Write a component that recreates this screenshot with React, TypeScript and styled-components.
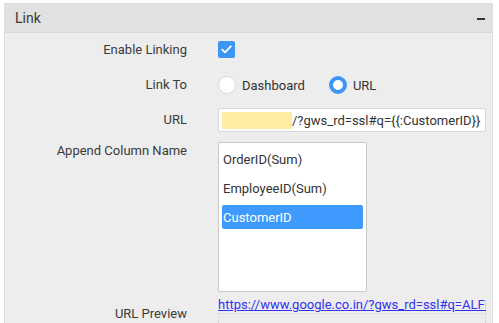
import React from "react";
import styled, { createGlobalStyle } from "styled-components";

const GlobalStyle = createGlobalStyle`
  html, body {
    margin: 0;
    padding: 0;
    background: #ffffff;
    font-family: Roboto, "Liberation Sans", Arial, sans-serif;
    color: #333333;
  }
  * { box-sizing: border-box; }
`;

const columns = ["OrderID(Sum)", "EmployeeID(Sum)", "CustomerID"];

const App = () => {
  return (
    <>
      <GlobalStyle />
      <Panel>
        <Header>
          <HeaderTitle>Link</HeaderTitle>
          <Collapse />
        </Header>
        <Body>
          <Row $top={4} $height={25}>
            <Label>Enable Linking</Label>
            <Checkbox>
              <svg width="11" height="9" viewBox="0 0 11 9">
                <path d="M1.2 4.6 L4 7.3 L9.8 1.3" fill="none" stroke="#fff" strokeWidth="1.8" strokeLinecap="round" strokeLinejoin="round" />
              </svg>
            </Checkbox>
          </Row>
          <Row $top={11} $height={24}>
            <Label>Link To</Label>
            <RadioGroup>
              <RadioOption>
                <Radio $checked={false} />
                <OptionText>Dashboard</OptionText>
              </RadioOption>
              <RadioOption>
                <Radio $checked={true} />
                <OptionText>URL</OptionText>
              </RadioOption>
            </RadioGroup>
          </Row>
          <Row $top={11} $height={24}>
            <Label>URL</Label>
            <UrlInput>
              <Redacted />
              <span>/?gws_rd=ssl#q={"{{"}:CustomerID{"}}"}</span>
            </UrlInput>
          </Row>
          <Row $top={10} $align="start">
            <Label $lineTop={0}>Append Column Name</Label>
            <ListBox>
              {columns.map((c) => (
                <ListItem key={c} $selected={c === "CustomerID"}>
                  {c}
                </ListItem>
              ))}
            </ListBox>
          </Row>
          <Row $top={5} $align="start">
            <Label $lineTop={8}>URL Preview</Label>
            <Preview>
              <PreviewLink href="#">https://www.google.co.in/?gws_rd=ssl#q=ALFKI</PreviewLink>
              <PreviewBox />
            </Preview>
          </Row>
        </Body>
      </Panel>
    </>
  );
};

const Panel = styled.div`
  margin: 3px 6px 0 4px;
  height: 320px;
  background: #ededed;
  border: 1px solid #dedede;
  border-bottom: none;
  overflow: hidden;
`;

const Header = styled.div`
  height: 29px;
  display: flex;
  align-items: center;
  justify-content: space-between;
  padding: 0 7px 0 10px;
  background: #e1e1e1;
  border-bottom: 1px solid #d8d8d8;
`;

const HeaderTitle = styled.span`
  font-size: 14px;
  color: #3a3a3a;
`;

const Collapse = styled.span`
  width: 8px;
  height: 2px;
  background: #333;
  margin-top: 2px;
`;

const Body = styled.div`
  padding-top: 0;
`;

const Row = styled.div<{ $top: number; $height?: number; $align?: string }>`
  display: flex;
  align-items: ${(p) => p.$align || "center"};
  margin-top: ${(p) => p.$top}px;
  height: ${(p) => (p.$height ? `${p.$height}px` : "auto")};
`;

const Label = styled.div<{ $lineTop?: number }>`
  width: 182px;
  flex: none;
  text-align: right;
  font-size: 13px;
  line-height: 18px;
  color: #3a3a3a;
  margin-right: 31px;
  padding-top: ${(p) => p.$lineTop || 0}px;
`;

const Checkbox = styled.span`
  width: 17px;
  height: 17px;
  border-radius: 2px;
  background: #3d95f4;
  display: flex;
  align-items: center;
  justify-content: center;
`;

const RadioGroup = styled.div`
  display: flex;
  align-items: center;
  gap: 24px;
`;

const RadioOption = styled.label`
  display: flex;
  align-items: center;
  gap: 6px;
`;

const Radio = styled.span<{ $checked: boolean }>`
  width: 18px;
  height: 18px;
  border-radius: 50%;
  background: #fff;
  border: ${(p) => (p.$checked ? "4px solid #3d95f4" : "1px solid #dadada")};
`;

const OptionText = styled.span`
  font-size: 13px;
  color: #333;
`;

const UrlInput = styled.div`
  width: 268px;
  height: 24px;
  background: #fff;
  border: 1px solid #d9d9d9;
  border-radius: 2px;
  display: flex;
  align-items: center;
  padding-left: 3px;
  font-size: 13px;
  color: #333;
  white-space: nowrap;
  overflow: hidden;
`;

const Redacted = styled.span`
  width: 70px;
  height: 17px;
  background: #fdeea2;
  flex: none;
`;

const ListBox = styled.div`
  width: 149px;
  height: 150px;
  background: #fff;
  border: 1px solid #c9c9c9;
  border-radius: 2px;
  padding: 3px 3px;
`;

const ListItem = styled.div<{ $selected: boolean }>`
  height: 24px;
  margin-bottom: ${(p) => (p.$selected ? 0 : 5)}px;
  margin-top: 1px;
  display: flex;
  align-items: center;
  padding-left: 1px;
  font-size: 13px;
  border-radius: 2px;
  color: ${(p) => (p.$selected ? "#fff" : "#333")};
  background: ${(p) => (p.$selected ? "#3e9bfd" : "transparent")};
`;

const Preview = styled.div`
  width: 268px;
  overflow: hidden;
`;

const PreviewLink = styled.a`
  display: block;
  font-size: 13px;
  line-height: 16px;
  color: #3232f0;
  white-space: nowrap;
  overflow: hidden;
`;

const PreviewBox = styled.div`
  margin-top: 0;
  height: 20px;
  border: 1px dotted #d4d4d4;
  border-bottom: none;
`;

export default App;
